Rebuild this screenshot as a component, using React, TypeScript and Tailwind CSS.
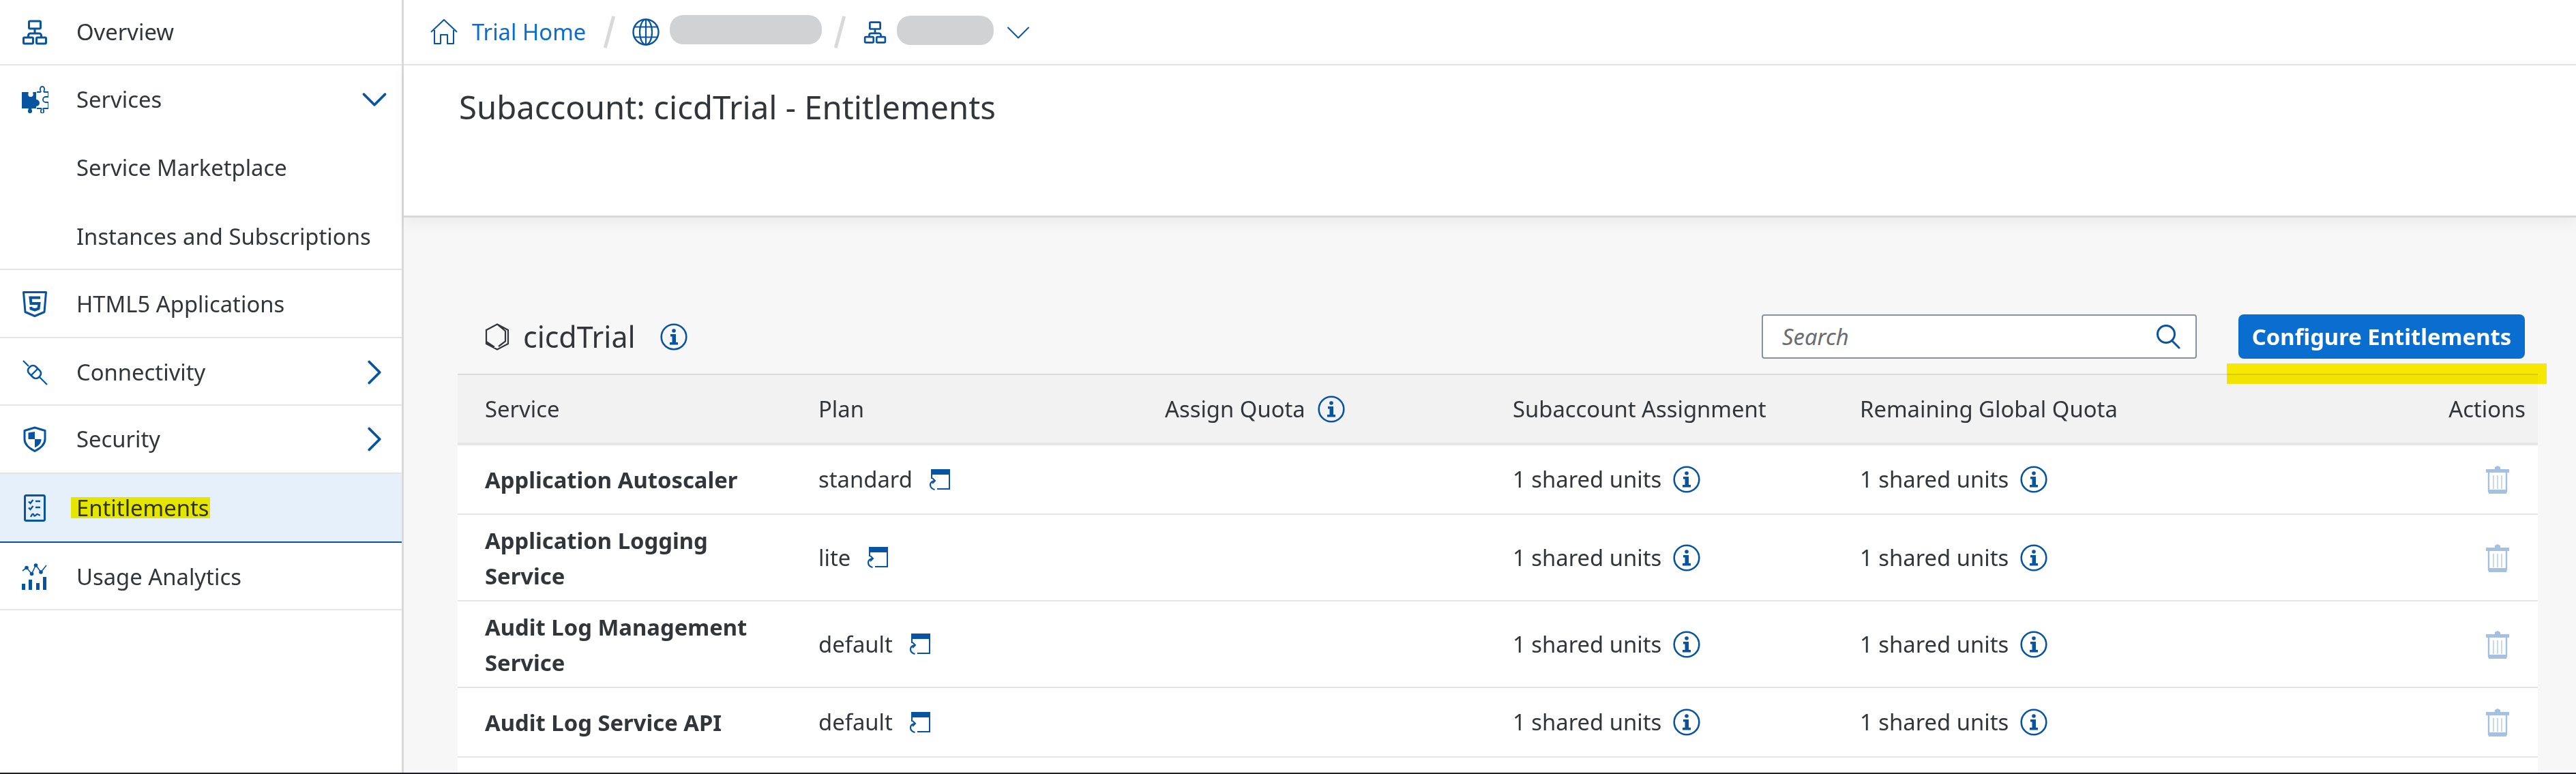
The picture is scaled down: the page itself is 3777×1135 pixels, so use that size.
import type { ReactNode } from "react"
import { ChevronDown, ChevronRight } from "lucide-react"

const blue = "#0854a0"

function Ico({ children, className = "w-10 h-10" }: { children: ReactNode; className?: string }) {
  return (
    <svg viewBox="0 0 40 40" fill="none" stroke={blue} strokeWidth={3} className={`${className} shrink-0`}>
      {children}
    </svg>
  )
}

const TreeIcon = ({ className }: { className?: string }) => (
  <Ico className={className}>
    <rect x="11.5" y="4" width="17" height="11" rx="1.5" />
    <rect x="3.5" y="28" width="14" height="9" rx="1.5" />
    <rect x="22.5" y="28" width="14" height="9" rx="1.5" />
    <path d="M20 15v7M10.5 28v-3a3 3 0 0 1 3-3h13a3 3 0 0 1 3 3v3" />
  </Ico>
)

const PuzzleIcon = () => (
  <Ico>
    <path
      fill={blue}
      stroke="none"
      d="M1 9h9c1 0 1 1 .6 2-1 3 1 5 3.400 5s4.400-2 3.400-5c-.4-1-.4-2 .6-2h4v11a5 5 0 0 1 0 10v3h-6c-1 0-1 1-.4 2 1.400 3-.4 5-2.600 5s-4-2-2.600-5c.6-1 .6-2-.4-2H1z"
    />
    <path
      strokeWidth={1.8}
      d="M23 9h5c.8 0 1-.8.5-1.600C27 4 28.500 1 31 1s4 3 2.500 6.400C33 8.200 33.200 9 34 9h6v7h-4a4 4 0 0 0 0 8h4v9h-7c-.8 0-1 .8-.5 1.600C34 38 32.500 40 31 40s-3-2-1.500-5.400c.5-.8.300-1.600-.5-1.600h-6"
    />
  </Ico>
)

const Html5Icon = () => (
  <Ico>
    <path d="M3.500 2.500h33l-2.500 29L20 37.500 6 31.500z" strokeLinejoin="round" />
    <path strokeWidth={4} d="M28 10.500H13.500l1 8.500h12l-1 7.500-5.500 2-5.500-2-.3-2.500" />
  </Ico>
)

const PlugIcon = () => (
  <Ico>
    <path strokeWidth={2.200} d="M3 3l8 8M27 27l11 11" />
    <rect x="-10" y="-7" width="20" height="14" rx="6" transform="translate(19.500 19.500) rotate(45)" strokeWidth={2.600} />
    <path strokeWidth={2.400} d="M14 25L25 14" />
  </Ico>
)

const ShieldIcon = () => (
  <Ico>
    <path d="M20 3l15 4.500V20c0 8-6 13-15 17.500C11 33 5 28 5 20V7.500z" strokeLinejoin="round" />
    <path fill={blue} stroke="none" d="M20 9v11H10.500V10.500zM20 20h9.500c0 6-3.500 9.500-9.500 12.500z" />
  </Ico>
)

const ChecklistIcon = () => (
  <Ico>
    <rect x="5.500" y="1.500" width="29" height="37" rx="2" />
    <path strokeWidth={2.400} d="M11 10.500l2.500 2.500 4-5M11 19.500l2.500 2.500 4-5M21 10h7M21 19h7" />
    <path strokeWidth={2.200} d="M14 33c2-4 3-5 4-4s.5 3 2 2.500 3-3 4-2.500 2 1.500 4 1.500" />
  </Ico>
)

const AnalyticsIcon = () => (
  <Ico>
    <path strokeWidth={1.600} d="M2 11l6-4.500 7.500 9 6-13 7.500 10.500L37 3" />
    <g fill={blue} stroke="none">
      <circle cx="8" cy="6.500" r="2.800" />
      <circle cx="15.500" cy="15.500" r="2.800" />
      <circle cx="21.500" cy="3" r="2.800" />
      <circle cx="29" cy="13" r="2.800" />
      <rect x="1" y="30" width="5" height="9" />
      <rect x="11" y="24" width="5" height="15" />
      <rect x="22" y="29" width="5" height="10" />
      <rect x="32" y="20" width="5" height="19" />
    </g>
  </Ico>
)

const HomeIcon = () => (
  <Ico>
    <path strokeWidth={2} d="M1 20L20 2l19 18M6 17v20h9V24h10v13h9V17" strokeLinejoin="round" />
  </Ico>
)

const GlobeIcon = () => (
  <Ico>
    <circle cx="20" cy="20" r="18.500" strokeWidth={2.400} />
    <ellipse cx="20" cy="20" rx="9" ry="18.500" strokeWidth={2.200} />
    <path strokeWidth={2.200} d="M20 1.500v37M3 12.500h34M3 27.500h34" />
  </Ico>
)

const InfoIcon = () => (
  <svg viewBox="0 0 40 40" fill="none" className="w-10 h-10 shrink-0">
    <circle cx="20" cy="20" r="18.300" stroke={blue} strokeWidth={2.600} />
    <circle cx="20" cy="11" r="2.800" fill={blue} />
    <path fill={blue} d="M15 16h8v12h3v3.500H14V28h3.500v-8.500H15z" />
  </svg>
)

const PlanIcon = () => (
  <svg viewBox="0 0 31 31" fill="none" stroke={blue} className="w-[31px] h-[31px] shrink-0">
    <path fill={blue} stroke="none" d="M3 0h28v8H3z" />
    <path strokeWidth={2} d="M30 7v22H12M4 7v7" />
    <path strokeWidth={2.200} d="M8.500 30c-4-1-6.500-4-6.500-7s2-5 6-6" />
    <path strokeWidth={2} d="M5 13l4 4-4 4" />
  </svg>
)

const TrashIcon = () => (
  <svg viewBox="0 0 36 42" fill="none" stroke="#a6c1df" className="w-9 h-[42px] shrink-0">
    <path fill="#a6c1df" stroke="none" d="M14 3l4-2 4 2v3h13v5H1V6h13z" />
    <path strokeWidth={2.400} d="M5 11v27a2 2 0 0 0 2 2h22a2 2 0 0 0 2-2V11" />
    <path strokeWidth={1.200} d="M12 15v20M18 15v20M24 15v20" />
    <path fill="#a6c1df" stroke="none" d="M5 36h26v6H5z" />
  </svg>
)

const HexIcon = () => (
  <svg viewBox="0 0 36 40" fill="none" stroke="#32363a" strokeWidth={2.200} className="w-9 h-10 shrink-0">
    <path d="M18 1.500L34 10v20l-16 8.500L2 30V10zM18 1.500L30 11.500v15L20 34M2 27l12 8" />
  </svg>
)

function NavRow({
  icon,
  label,
  arrow,
  active,
  size = "h-[100px]",
}: {
  icon?: ReactNode
  label: string
  arrow?: "down" | "right"
  active?: boolean
  size?: string
}) {
  return (
    <div className={`${size} flex items-center pl-[31px] pr-[9px] ${active ? "bg-[#e5f0fa]" : ""}`}>
      <div className="w-10 h-10 mr-[41px] shrink-0">{icon}</div>
      <span className="flex-1 relative">
        {label}
        {active && <span className="absolute left-[-8px] top-[9px] w-[204px] h-[31px] bg-[#fff500] mix-blend-multiply" />}
      </span>
      {arrow === "down" && <ChevronDown className="w-[62px] h-[62px] text-[#0854a0]" strokeWidth={1.500} />}
      {arrow === "right" && <ChevronRight className="w-[62px] h-[62px] text-[#0854a0]" strokeWidth={1.500} />}
    </div>
  )
}

const services = [
  { name: "Application Autoscaler", plan: "standard", h: "h-[102px]" },
  { name: "Application Logging Service", plan: "lite", h: "h-[127px]" },
  { name: "Audit Log Management Service", plan: "default", h: "h-[127px]" },
  { name: "Audit Log Service API", plan: "default", h: "h-[102px]" },
]

const gridCols = "grid grid-cols-[489px_508px_510px_509px_1fr] items-center pl-[40px] pr-[18px]"

function Units() {
  return (
    <div className="flex items-center gap-[17px]">
      <span>1 shared units</span>
      <InfoIcon />
    </div>
  )
}

export default function App() {
  return (
    <div className="h-[1135px] w-[3777px] overflow-hidden flex bg-white text-[#32363a] text-[32.800px] font-['Noto_Sans',sans-serif] border-b-2 border-[#1d2125]">
      <aside className="w-[592px] shrink-0 border-r-[3px] border-[#d9d9d9] bg-white">
        <div className="border-b-2 border-[#e5e5e5] -mt-[1px]">
          <NavRow icon={<TreeIcon />} label="Overview" size="h-[95px]" />
        </div>
        <div className="border-b-2 border-[#e5e5e5]">
          <NavRow icon={<PuzzleIcon />} label="Services" arrow="down" />
          <NavRow label="Service Marketplace" />
          <NavRow label="Instances and Subscriptions" size="h-[98px] pt-[4px]" />
        </div>
        <div className="border-b-2 border-[#e5e5e5]">
          <NavRow icon={<Html5Icon />} label="HTML5 Applications" size="h-[98px] pt-[2px]" />
        </div>
        <div className="border-b-2 border-[#e5e5e5]">
          <NavRow icon={<PlugIcon />} label="Connectivity" arrow="right" size="h-[97px] pt-[2px]" />
        </div>
        <div className="border-b-2 border-[#e5e5e5]">
          <NavRow icon={<ShieldIcon />} label="Security" arrow="right" size="h-[98px]" />
        </div>
        <div className="border-b-2 border-[#0854a0]">
          <NavRow icon={<ChecklistIcon />} label="Entitlements" active size="h-[99px] pt-[1px]" />
        </div>
        <div className="border-b-2 border-[#e5e5e5]">
          <NavRow icon={<AnalyticsIcon />} label="Usage Analytics" size="h-[97px] pt-[2px]" />
        </div>
      </aside>

      <main className="flex-1 min-w-0 flex flex-col bg-[#f7f7f7]">
        <div className="h-[97px] shrink-0 bg-white border-b-2 border-[#e5e5e5] flex items-center pl-[39px] -mt-[1px]">
          <HomeIcon />
          <span className="ml-[21px] text-[#0a6ed1]">Trial Home</span>
          <span className="ml-[32px] w-[5px] h-12 bg-[#d9d9d9] rotate-[15deg]" />
          <span className="ml-[31px]"><GlobeIcon /></span>
          <span className="ml-[15px] w-[223px] h-[43px] rounded-[20px] bg-[#d1d2d4] -mt-[6px]" />
          <span className="ml-[24px] w-[5px] h-12 bg-[#d9d9d9] rotate-[15deg]" />
          <span className="ml-[31px]"><TreeIcon className="w-9 h-10" /></span>
          <span className="ml-[14px] w-[142px] h-[43px] rounded-[20px] bg-[#d1d2d4] -mt-[4px]" />
          <ChevronDown className="ml-[6px] w-[60px] h-[60px] text-[#0854a0] mt-[2px]" strokeWidth={0.800} />
        </div>
        <div className="h-[223px] shrink-0 bg-white border-b-[3px] border-[#d9d9d9] pl-[81px] pt-[29px] text-[47.300px] leading-[64px] shadow-[0_8px_20px_rgba(0,0,0,0.05)]">
          Subaccount: cicdTrial - Entitlements
        </div>

        <div className="flex-1 min-h-0 pl-[79px] pr-[56px] relative">
          <div className="h-[229px] flex items-end pb-[22px] pr-[19px]">
            <div className="flex items-center flex-1 pl-[40px] h-[65px]">
              <HexIcon />
              <span className="ml-[20px] text-[43px] leading-[52px]">cicdTrial</span>
              <span className="ml-[36px]"><InfoIcon /></span>
            </div>
            <div className="w-[638px] h-[65px] bg-white border-2 border-[#89919a] rounded-[4px] flex items-center pl-[28px] pr-[22px]">
              <span className="flex-1 italic text-[#6a6d70]">Search</span>
              <svg viewBox="0 0 36 36" fill="none" stroke={blue} strokeWidth={3} className="w-9 h-9">
                <circle cx="15" cy="14" r="12.500" />
                <path strokeLinecap="round" d="M24 24l10 10" />
              </svg>
            </div>
            <div className="ml-[61px] w-[420px] h-[65px] bg-[#0a6ed1] rounded-[8px] flex items-center justify-center text-white font-bold">
              Configure Entitlements
            </div>
          </div>
          <div className="absolute right-[43px] top-[214px] w-[469px] h-[30px] bg-[#fff000] mix-blend-multiply" />

          <div className={`${gridCols} h-[105px] bg-[#f2f2f2] border-t-2 border-[#d9d9d9] border-b-4 border-b-[#e5e5e5]`}>
            <span>Service</span>
            <span>Plan</span>
            <span className="flex items-center gap-[18px]">Assign Quota <InfoIcon /></span>
            <span>Subaccount Assignment</span>
            <div className="flex items-center justify-between">
              <span>Remaining Global Quota</span>
              <span>Actions</span>
            </div>
          </div>
          {services.map((s) => (
            <div key={s.name} className={`${gridCols} ${s.h} bg-white border-b-2 border-[#e5e5e5]`}>
              <span className="font-bold leading-[52px] max-w-[440px] pt-[2px]">{s.name}</span>
              <div className="flex items-center gap-[24px]">
                <span>{s.plan}</span>
                <PlanIcon />
              </div>
              <span />
              <Units />
              <div className="flex items-center justify-between pr-[23px]">
                <Units />
                <TrashIcon />
              </div>
            </div>
          ))}
          <div className="bg-white h-[40px]" />
        </div>
      </main>
    </div>
  )
}
